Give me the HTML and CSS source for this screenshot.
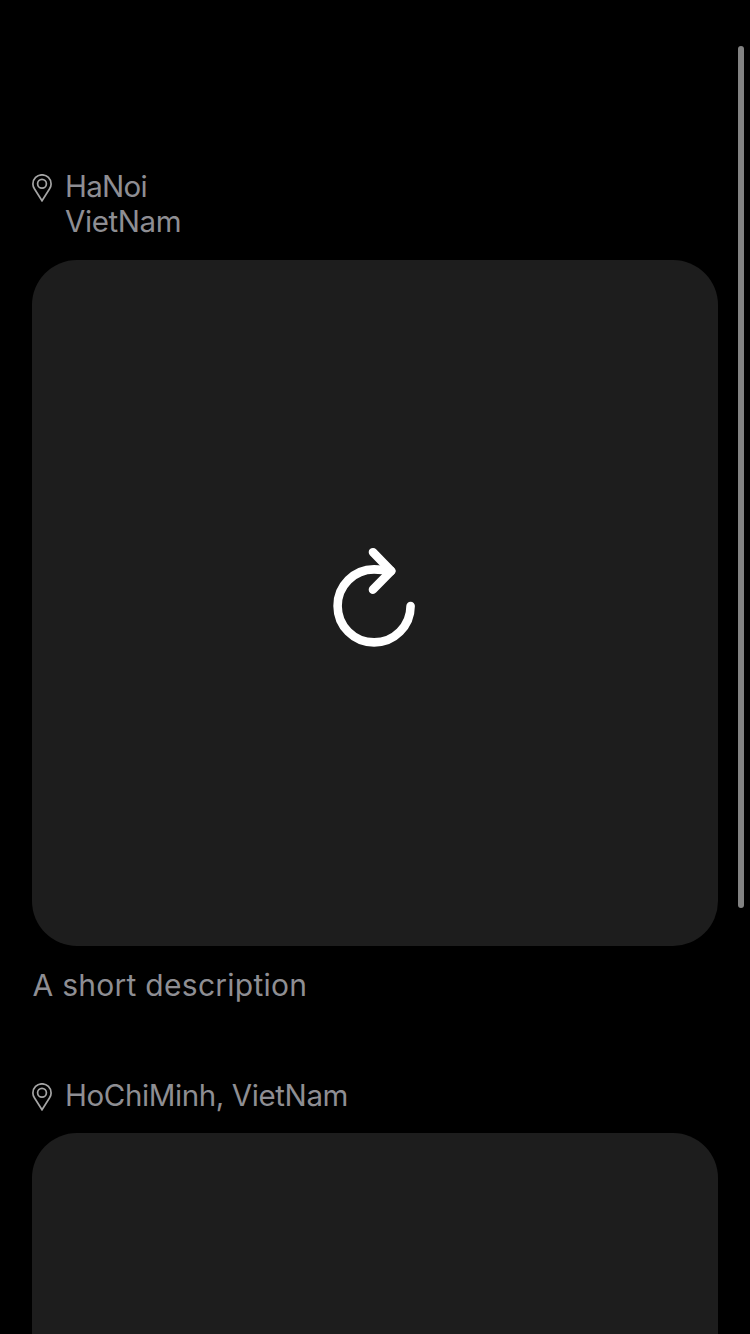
FILE: index.html
```html
<!DOCTYPE html>
<html lang="en">
<head>
<meta charset="utf-8">
<title>Places</title>
<link rel="stylesheet" href="styles.css">
</head>
<body>
<main class="feed">
  <article class="post">
    <header class="place">
      <svg class="pin" viewBox="0 0 20 28"><path d="M10 26.8 L2.4 14.8 C1.4 13.2 .9 11.7 .9 9.9 A9.1 9.1 0 0 1 19.1 9.9 C19.1 11.7 18.6 13.2 17.6 14.8Z"/><circle cx="10" cy="9.8" r="4.4"/></svg>
      <div class="place-name"><span class="city">HaNoi</span><br><span class="country">VietNam</span></div>
    </header>
    <div class="photo">
      <svg class="reload" viewBox="0 0 84 102"><path d="M78.6 59 A36.5 36.5 0 1 1 42 22.4 Q50 22.4 59 24.1"/><path d="M41 5.2 L59.2 24.1 L41 42.6"/></svg>
    </div>
    <p class="caption">A short description</p>
  </article>
  <article class="post">
    <header class="place">
      <svg class="pin" viewBox="0 0 20 28"><path d="M10 26.8 L2.4 14.8 C1.4 13.2 .9 11.7 .9 9.9 A9.1 9.1 0 0 1 19.1 9.9 C19.1 11.7 18.6 13.2 17.6 14.8Z"/><circle cx="10" cy="9.8" r="4.4"/></svg>
      <div class="place-name">HoChiMinh, VietNam</div>
    </header>
    <div class="photo"></div>
  </article>
</main>
<div class="scroll-thumb"></div>
</body>
</html>
```
FILE: styles.css
```css
body {
  margin: 0;
  background: #000;
  color: #8e8e93;
  font: 400 29.5px/35px Inter, sans-serif;
}
.feed {
  box-sizing: border-box;
  height: 1334px;
  overflow: hidden;
  padding: 169px 32px 0;
}
.post {
  margin-bottom: 75px;
}
.place {
  display: flex;
  gap: 13px;
  margin-bottom: 21px;
}
.post + .post .place {
  margin-bottom: 20px;
}
.place-name {
  letter-spacing: -0.4px;
}
.city {
  letter-spacing: -0.75px;
}
.pin {
  width: 20px;
  height: 28px;
  margin-top: 5px;
  fill: none;
  stroke: #a5a5a5;
  stroke-width: 1.7;
}
.photo {
  display: flex;
  justify-content: center;
  height: 686px;
  border-radius: 45px;
  background: #1d1d1d;
}
.post + .post .photo {
  height: 201px;
  border-radius: 45px 45px 0 0;
}
.reload {
  width: 84px;
  height: 102px;
  margin: 287px 2px 0 0;
  fill: none;
  stroke: #fff;
  stroke-width: 8.6;
  stroke-linecap: round;
  stroke-linejoin: round;
}
.caption {
  margin: 22px 0 0 0.5px;
  font-size: 30px;
  letter-spacing: 0.27px;
}
.scroll-thumb {
  position: absolute;
  top: 46px;
  right: 6px;
  width: 6px;
  height: 862px;
  border-radius: 3px;
  background: #828282;
}
```
